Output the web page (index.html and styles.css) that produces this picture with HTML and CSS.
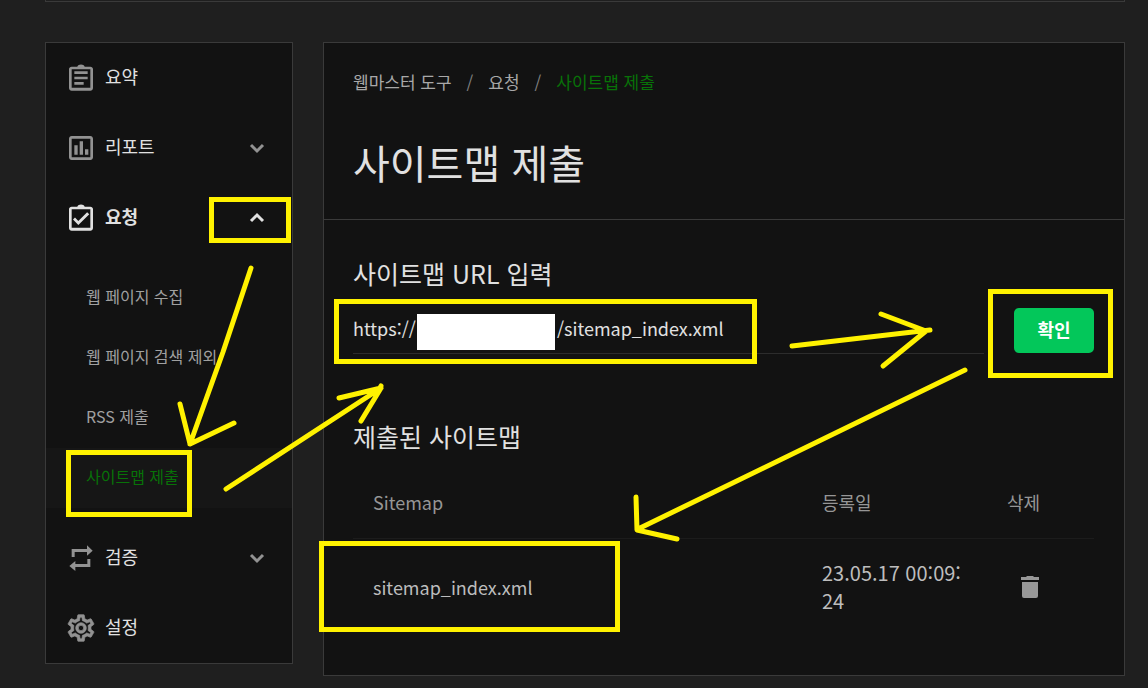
FILE: index.html
```html
<!DOCTYPE html>
<html lang="ko">
<head>
<meta charset="utf-8">
<meta name="viewport" content="width=device-width, initial-scale=1">
<title>사이트맵 제출</title>
<link rel="stylesheet" href="styles.css">
</head>
<body>
<div class="top-strip"></div>
<div class="layout">
  <nav class="sidebar">
    <a class="menu-item" href="#">
      <svg class="icon" viewBox="0 0 24 24"><path d="M7 15h7v2H7zm0-4h10v2H7zm0-4h10v2H7zm12-3.500h-4.200c-.4-1.200-1.500-1.700-2.800-1.700s-2.400.5-2.800 1.700H5c-1.100 0-2 .7-2 1.800v14.200c0 1.100.9 2 2 2h14c1.100 0 2-.9 2-2V5.300c0-1.100-.9-1.800-2-1.800zM19 19.300H5V5.500h14z"/></svg>
      <span class="menu-label">요약</span>
    </a>
    <a class="menu-item" href="#">
      <svg class="icon" viewBox="0 0 24 24"><path d="M19 3H5c-1.100 0-2 .9-2 2v14c0 1.100.9 2 2 2h14c1.100 0 2-.9 2-2V5c0-1.100-.9-2-2-2zm0 16H5V5h14zM7 10h2.500v7H7zm4-3h2.500v10H11zm4 6h2.500v4H15z"/></svg>
      <span class="menu-label">리포트</span>
      <svg class="chevron" viewBox="0 0 16 16"><path d="M2 5l6 6 6-6"/></svg>
    </a>
    <a class="menu-item menu-item-open" href="#">
      <svg class="icon" viewBox="0 0 24 24"><path d="M19 3.500h-4.200c-.4-1.200-1.500-1.700-2.800-1.700s-2.400.5-2.800 1.700H5c-1.100 0-2 .7-2 1.800v14.200c0 1.100.9 2 2 2h14c1.100 0 2-.9 2-2V5.300c0-1.100-.9-1.800-2-1.800zM19 19.300H5V5.500h14zM18.200 9.200l-1.600-1.600-6.600 6.600-2.500-2.500L6 13.200l4 4z"/></svg>
      <span class="menu-label">요청</span>
      <svg class="chevron" viewBox="0 0 16 16"><path d="M2 11l6-6 6 6"/></svg>
    </a>
    <div class="submenu">
      <a class="submenu-item" href="#">웹 페이지 수집</a>
      <a class="submenu-item" href="#">웹 페이지 검색 제외</a>
      <a class="submenu-item" href="#">RSS 제출</a>
      <a class="submenu-item submenu-item-active" href="#">사이트맵 제출</a>
    </div>
    <a class="menu-item" href="#">
      <svg class="icon" viewBox="0 0 96 96"><path d="M20 45V21H66V10L83 26 66 41V30H29V45zM76 51V75H31V87L13 72 31 57V66H67V51z"/></svg>
      <span class="menu-label">검증</span>
      <svg class="chevron" viewBox="0 0 16 16"><path d="M2 5l6 6 6-6"/></svg>
    </a>
    <a class="menu-item" href="#">
      <svg class="icon icon-heavy" viewBox="0 0 24 24"><path d="M19.430 12.980c.04-.32.070-.64.070-.98s-.03-.66-.07-.98l2.110-1.650c.19-.15.240-.42.120-.64l-2-3.460c-.12-.22-.39-.3-.61-.22l-2.490 1c-.52-.4-1.080-.73-1.690-.98l-.38-2.650A.488.488 0 0 0 14 2h-4c-.25 0-.46.180-.49.420l-.38 2.650c-.61.250-1.170.590-1.690.980l-2.490-1c-.23-.09-.49 0-.61.220l-2 3.460c-.13.220-.07.490.120.640l2.110 1.650c-.04.320-.07.650-.07.980s.03.660.070.980l-2.110 1.650c-.19.150-.24.420-.12.640l2 3.460c.12.220.390.300.610.220l2.490-1c.52.400 1.080.730 1.690.980l.38 2.650c.03.240.240.420.490.420h4c.25 0 .46-.18.490-.42l.38-2.650c.61-.25 1.170-.59 1.690-.98l2.490 1c.23.090.490 0 .61-.22l2-3.460c.12-.22.070-.49-.12-.64zm-1.980-1.710c.04.310.050.520.050.730 0 .21-.02.430-.05.730l-.14 1.130.89.700 1.080.840-.7 1.210-1.270-.51-1.040-.42-.9.680c-.43.320-.84.560-1.250.730l-1.060.430-.16 1.130-.2 1.350h-1.400l-.19-1.350-.16-1.130-1.060-.43c-.43-.18-.83-.41-1.230-.71l-.91-.7-1.060.430-1.270.510-.7-1.210 1.080-.84.890-.7-.14-1.130c-.03-.31-.05-.54-.05-.74s.02-.43.050-.73l.14-1.130-.89-.7-1.080-.84.700-1.210 1.270.510 1.040.420.900-.68c.43-.32.840-.56 1.250-.73l1.060-.43.160-1.130.2-1.350h1.390l.19 1.350.16 1.130 1.060.430c.43.180.83.410 1.230.710l.91.700 1.060-.43 1.270-.51.700 1.210-1.070.850-.89.700zM12 8a4 4 0 1 0 0 8 4 4 0 0 0 0-8zm0 6a2 2 0 1 1 0-4 2 2 0 0 1 0 4z"/></svg>
      <span class="menu-label">설정</span>
    </a>
  </nav>

  <main class="panel">
    <header class="panel-header">
      <nav class="breadcrumb">
        <a href="#">웹마스터 도구</a><span class="slash">/</span><a href="#">요청</a><span class="slash">/</span><a class="current" href="#">사이트맵 제출</a>
      </nav>
      <h1 class="title">사이트맵 제출</h1>
    </header>
    <div class="panel-body">
      <form class="submit-form">
        <label class="section-title" for="sitemap-url">사이트맵 URL 입력</label>
        <div class="submit-row">
          <div class="url-field">
            <input class="url-input" id="sitemap-url" type="text" value="https://&nbsp;&nbsp;&nbsp;&nbsp;&nbsp;&nbsp;&nbsp;&nbsp;&nbsp;&nbsp;&nbsp;&nbsp;&nbsp;&nbsp;&nbsp;&nbsp;&nbsp;&nbsp;&nbsp;&nbsp;&nbsp;&nbsp;&nbsp;&nbsp;&nbsp;&nbsp;&nbsp;&nbsp;/sitemap_index.xml">
            <span class="domain-mask"></span>
          </div>
          <button class="confirm" type="button">확인</button>
        </div>
      </form>
      <h2 class="section-title">제출된 사이트맵</h2>
      <table class="sitemaps">
        <thead>
          <tr><th scope="col">Sitemap</th><th class="col-date" scope="col">등록일</th><th class="col-delete" scope="col">삭제</th></tr>
        </thead>
        <tbody>
          <tr>
            <td>sitemap_index.xml</td>
            <td class="date">23.05.17 00:09:24</td>
            <td><button class="delete" type="button" aria-label="삭제"><svg viewBox="0 0 30 30"><path d="M7 10h16v14q0 2-2 2H9q-2 0-2-2zM6 5h5l1-1h6l1 1h5v3H6z"/></svg></button></td>
          </tr>
        </tbody>
      </table>
    </div>
  </main>
</div>

<svg class="marks" viewBox="0 0 1148 688" aria-hidden="true">
  <g class="boxes">
    <rect x="211.500" y="199.500" width="77" height="41"/>
    <rect x="68.500" y="452.500" width="121" height="62"/>
    <rect x="336.500" y="301.500" width="418" height="60"/>
    <rect x="990.500" y="291.500" width="120" height="84"/>
    <rect x="321.500" y="543.500" width="296" height="86"/>
  </g>
  <g class="arrows">
    <path d="M251 268L223 352 190 444M180 404L190 444 234 423"/>
    <path d="M226 489L381 388M339 398L381 388 361 421M378 391L381 386"/>
    <path d="M792 346L930 330M881 314L926 331 883 366"/>
    <path d="M965 370L638 529M636 497L637 530 677 539"/>
  </g>
</svg>
</body>
</html>
```

FILE: styles.css
```css
* {
  box-sizing: border-box;
}

body {
  position: relative;
  margin: 0;
  background: #1f1f1f;
  color: #e1e1e1;
  font-family: "Noto Sans CJK KR", sans-serif;
  font-size: 18px;
  line-height: 28px;
}

a {
  color: inherit;
  text-decoration: none;
}

.top-strip {
  height: 2px;
  margin: 0 23px 0 45px;
  background: #1f1f1f;
  border: 1px solid #3a3a3a;
  border-top: 0;
}

.layout {
  display: flex;
  align-items: flex-start;
  gap: 30px;
  padding: 40px 23px 12px 45px;
}

.sidebar {
  flex: 0 0 248px;
  background: #121212;
  border: 1px solid #3a3a3a;
}

.menu-item {
  display: flex;
  align-items: center;
  gap: 8px;
  height: 70px;
  padding: 0 27px 0 19px;
}

.menu-label {
  padding-bottom: 4px;
}

.icon {
  width: 32px;
  height: 32px;
  fill: #929292;
}

.icon-heavy {
  stroke: #929292;
  stroke-width: 0.5;
}

.chevron {
  width: 16px;
  height: 16px;
  margin-left: auto;
  fill: none;
  stroke: #929292;
  stroke-width: 3;
}

.menu-item-open {
  font-weight: 700;
}

.menu-item-open .icon {
  fill: #e1e1e1;
}

.menu-item-open .chevron {
  stroke: #e1e1e1;
}

.submenu {
  padding: 15px 0;
  color: #a0a0a0;
  font-size: 16px;
}

.submenu-item {
  display: flex;
  align-items: center;
  height: 60px;
  padding: 0 20px 4px 40px;
}

.submenu-item-active {
  background: #161616;
  color: #087208;
}

.panel {
  flex: 1;
  min-width: 0;
  background: #121212;
  border: 1px solid #3a3a3a;
}

.panel-header {
  padding: 25px 29px 27px;
  border-bottom: 1px solid #3a3a3a;
}

.breadcrumb {
  display: flex;
  gap: 15px;
  color: #a8a8a8;
  font-size: 17px;
}

.slash {
  color: #808080;
}

.current {
  color: #087208;
}

.title {
  margin: 36px 0 0;
  font-size: 40px;
  font-weight: 400;
  line-height: 60px;
}

.panel-body {
  padding: 34px 30px 40px 29px;
}

.section-title {
  display: block;
  margin: 0;
  font-size: 25px;
  font-weight: 400;
  line-height: 38px;
}

.submit-form {
  margin-bottom: 63px;
}

.submit-row {
  display: flex;
  align-items: flex-end;
  gap: 30px;
  margin-top: 12px;
}

.url-field {
  position: relative;
  flex: 1;
  min-width: 0;
}

.url-input {
  display: block;
  width: 100%;
  height: 50px;
  padding: 0 0 2px;
  background: transparent;
  border: 0;
  border-bottom: 1px solid #2c2c2c;
  color: #e1e1e1;
  font-family: inherit;
  font-size: 18px;
  outline: 0;
}

.domain-mask {
  position: absolute;
  top: 10px;
  left: 64px;
  width: 138px;
  height: 36px;
  background: #fff;
}

.confirm {
  width: 80px;
  height: 45px;
  margin-bottom: 1px;
  padding: 0 0 4px;
  background: #03c75a;
  border: 0;
  border-radius: 5px;
  color: #fff;
  font-family: inherit;
  font-size: 18px;
  font-weight: 700;
}

.sitemaps {
  width: 100%;
  margin-top: 13px;
  border-collapse: collapse;
  table-layout: fixed;
  color: #bdbdbd;
}

th {
  height: 70px;
  padding: 0 20px 2px;
  border-bottom: 1px solid #1c1c1c;
  color: #969696;
  font-weight: 400;
  text-align: left;
}

td {
  height: 97px;
  padding: 0 20px;
}

.col-date {
  width: 185px;
}

.col-delete {
  width: 107px;
}

.date {
  font-size: 20px;
  word-break: break-all;
}

.delete {
  display: block;
  padding: 0 8px;
  background: none;
  border: 0;
}

.delete svg {
  display: block;
  width: 30px;
  height: 30px;
  fill: #989898;
}

.marks {
  position: absolute;
  top: 0;
  left: 0;
  width: 1148px;
  height: 688px;
  fill: none;
  stroke: #fff200;
  stroke-width: 5;
  pointer-events: none;
}

.arrows {
  stroke-linecap: round;
  stroke-linejoin: round;
}
```
